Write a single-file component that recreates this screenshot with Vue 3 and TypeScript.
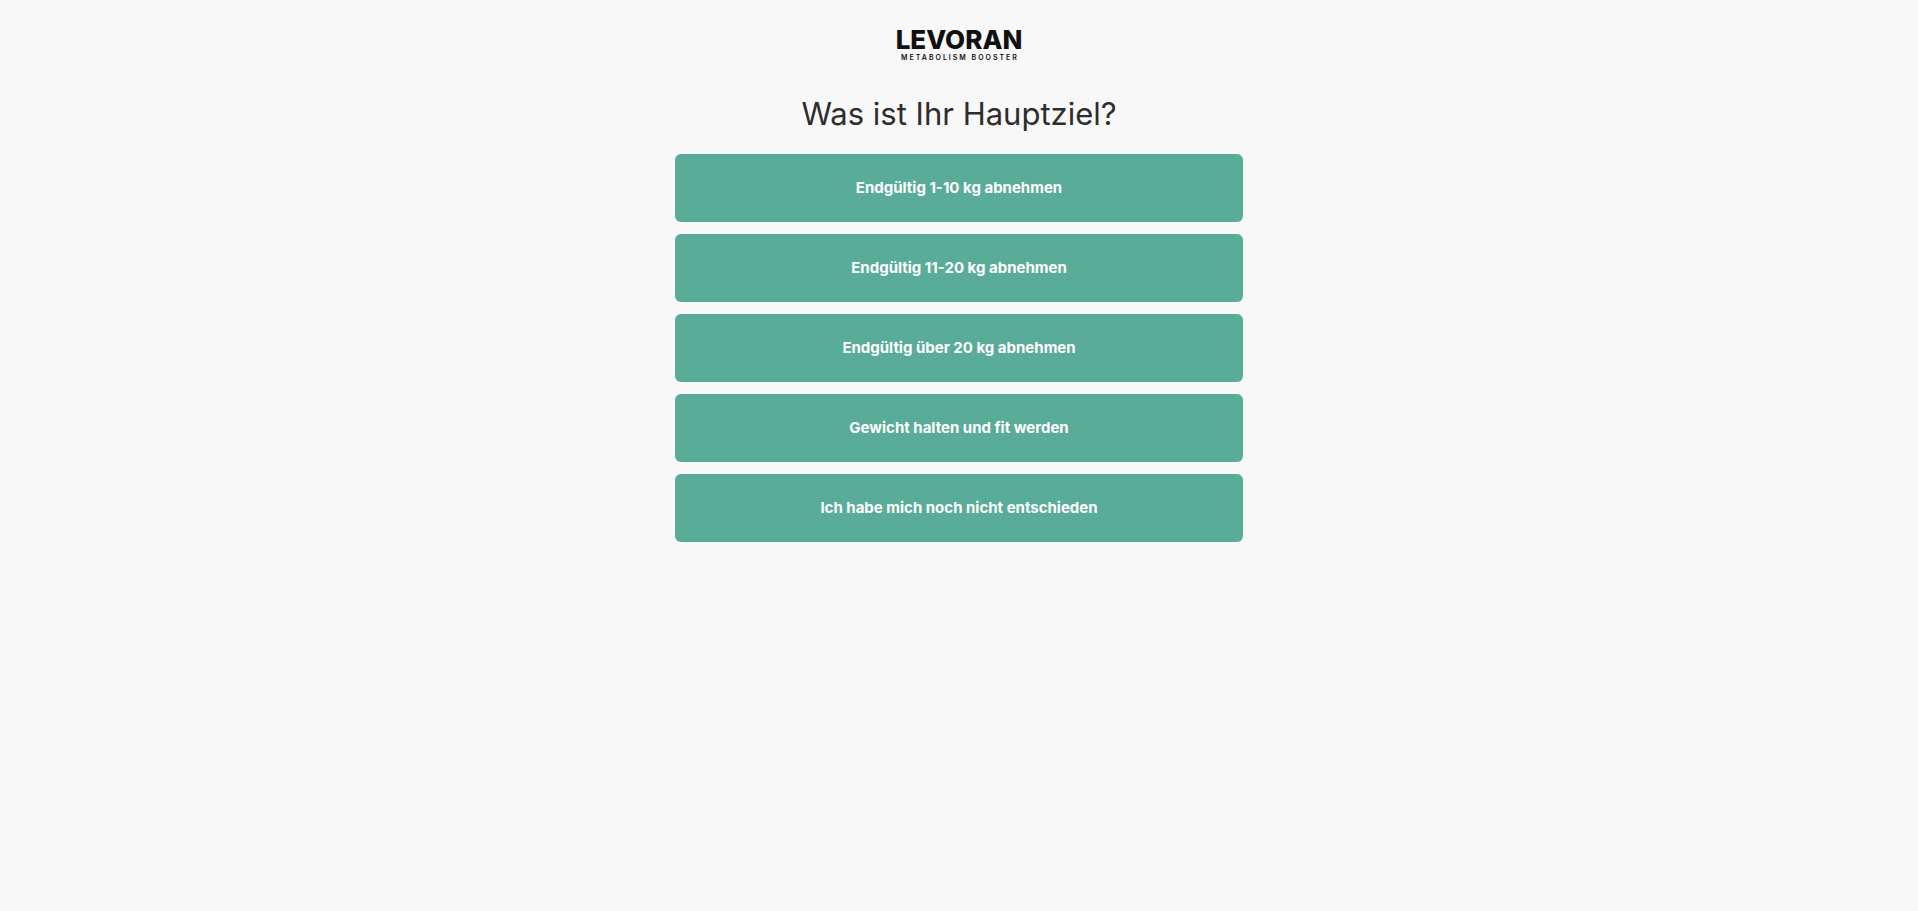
<script setup lang="ts">
const goals: string[] = [
  'Endgültig 1-10 kg abnehmen',
  'Endgültig 11-20 kg abnehmen',
  'Endgültig über 20 kg abnehmen',
  'Gewicht halten und fit werden',
  'Ich habe mich noch nicht entschieden',
]
</script>

<template>
  <main class="quiz">
    <header class="logo">
      <span class="logo-name">LEVORAN</span>
      <span class="logo-claim">METABOLISM BOOSTER</span>
    </header>
    <h1 class="question">Was ist Ihr Hauptziel?</h1>
    <div class="answers">
      <button v-for="goal in goals" :key="goal" type="button" class="answer">{{ goal }}</button>
    </div>
  </main>
</template>

<style>
body {
  margin: 0;
  background: #f8f8f8;
}
</style>

<style scoped>
.quiz {
  box-sizing: border-box;
  max-width: 600px;
  margin: 0 auto;
  padding: 27px 16px;
  font-family: Inter, "Liberation Sans", sans-serif;
  color: #2d2d2d;
}
.logo {
  display: flex;
  flex-direction: column;
  align-items: center;
  color: #111;
  white-space: nowrap;
}
.logo-name {
  font-size: 26px;
  line-height: 26px;
  font-weight: 800;
}
.logo-claim {
  padding-left: 2px;
  font-size: 7px;
  line-height: 9px;
  font-weight: 600;
  letter-spacing: 2px;
}
.question {
  margin: 32px 0 20px;
  font-size: 31px;
  line-height: 40px;
  font-weight: 400;
  text-align: center;
}
.answers {
  display: flex;
  flex-direction: column;
  gap: 12px;
}
.answer {
  min-height: 68px;
  padding: 16px;
  border: 0;
  border-radius: 6px;
  background: #59ad98;
  color: #fff;
  font: 700 15px/24px Inter, "Liberation Sans", sans-serif;
  cursor: pointer;
}
</style>
